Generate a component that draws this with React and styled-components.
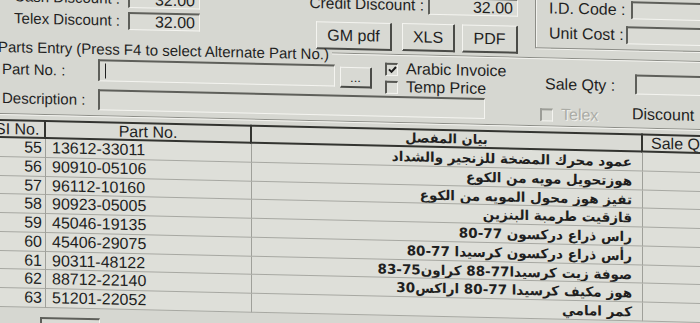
import React from "react";
import styled, { createGlobalStyle } from "styled-components";

const GlobalStyle = createGlobalStyle`
  html, body { margin: 0; padding: 0; background: #d6d7d1; overflow: hidden; }
  body { font-family: "Liberation Sans", Arial, sans-serif; color: #1f1f1f; }
`;

const Screen = styled.div`
  width: 700px;
  height: 323px;
  overflow: hidden;
  background: #d6d7d1;
`;

const Form = styled.div`
  width: 760px;
  margin-top: -14px;
  display: flex;
  flex-direction: column;
  transform: skewY(1.3deg);
  transform-origin: 0 0;
`;

const TopSection = styled.div`
  display: flex;
  height: 55px;
`;

const Column = styled.div`
  display: flex;
  flex-direction: column;
  width: ${(p) => p.$width}px;
  margin-left: ${(p) => p.$offset || 0}px;
  gap: ${(p) => p.$gap || 0}px;
  padding-top: ${(p) => p.$top || 0}px;
`;

const FieldRow = styled.div`
  display: flex;
  align-items: center;
  height: ${(p) => p.$h || 18}px;
`;

const Label = styled.div`
  width: ${(p) => p.$width}px;
  flex: none;
  text-align: ${(p) => p.$align || "left"};
  padding-left: ${(p) => p.$pad || 0}px;
  margin-top: ${(p) => p.$top || 0}px;
  box-sizing: border-box;
  font-size: ${(p) => p.$size || 15}px;
  line-height: 16px;
  white-space: nowrap;
  color: #1f1f1f;
`;

const Input = styled.div`
  flex: none;
  width: ${(p) => p.$width}px;
  height: ${(p) => p.$h || 18}px;
  margin-left: ${(p) => p.$ml || 0}px;
  margin-top: ${(p) => p.$top || 0}px;
  box-sizing: border-box;
  border-top: 2px solid #5e5f5a;
  border-left: 2px solid #5e5f5a;
  border-right: 1px solid #f4f4f0;
  border-bottom: 1px solid #f4f4f0;
  background: #dadbd5;
  font-size: 16px;
  line-height: ${(p) => (p.$h || 18) - 3}px;
  padding: 0 4px;
  display: flex;
  align-items: center;
  justify-content: ${(p) => (p.$caret ? "flex-start" : "flex-end")};
`;

const Caret = styled.span`
  display: block;
  width: 1px;
  height: 15px;
  background: #202020;
  margin-left: 1px;
`;

const Button = styled.div`
  flex: none;
  width: ${(p) => p.$width}px;
  height: ${(p) => p.$h || 28}px;
  margin-left: ${(p) => p.$ml || 0}px;
  margin-top: ${(p) => p.$top || 0}px;
  box-sizing: border-box;
  border-top: 1px solid #f4f4f0;
  border-left: 1px solid #f4f4f0;
  border-right: 2px solid #4a4b47;
  border-bottom: 2px solid #4a4b47;
  background: #d8d9d3;
  display: flex;
  align-items: center;
  justify-content: center;
  font-size: ${(p) => p.$size || 16}px;
  color: #1f1f1f;
`;

const ButtonRow = styled.div`
  display: flex;
  margin-top: 9px;
`;

const RightGroup = styled.div`
  display: flex;
  flex-direction: column;
  gap: 7px;
  margin-left: 15px;
  width: 220px;
  height: 50px;
  padding-left: 13px;
  padding-top: 1px;
  box-sizing: border-box;
  border-left: 1px solid #8c8d87;
  border-bottom: 1px solid #8c8d87;
  box-shadow: inset 1px 0 0 #f2f2ee, 0 1px 0 #f2f2ee;
`;

const CaptionRow = styled.div`
  display: flex;
  align-items: center;
  height: 12px;
  margin-left: -2px;
`;

const Caption = styled.span`
  font-size: 15px;
  line-height: 14px;
  white-space: nowrap;
  padding-right: 3px;
`;

const Rule = styled.div`
  flex: 1;
  height: 0;
  border-top: 1px solid #8c8d87;
  border-bottom: 1px solid #f2f2ee;
  margin-top: -2px;
`;

const EntryRow = styled.div`
  display: flex;
  align-items: flex-start;
  height: ${(p) => p.$h}px;
`;

const CheckColumn = styled.div`
  display: flex;
  flex-direction: column;
  gap: 4px;
  margin-left: ${(p) => p.$ml}px;
  margin-top: ${(p) => p.$top || 0}px;
  width: ${(p) => p.$width}px;
`;

const CheckRow = styled.div`
  display: flex;
  align-items: center;
  height: 14px;
  gap: 8px;
  font-size: 16px;
  white-space: nowrap;
  color: ${(p) => (p.$disabled ? "#abaca6" : "#1f1f1f")};
  text-shadow: ${(p) => (p.$disabled ? "1px 1px 0 #f2f2ee" : "none")};
`;

const Box = styled.span`
  width: 13px;
  height: 13px;
  flex: none;
  box-sizing: border-box;
  border-top: 2px solid ${(p) => (p.$disabled ? "#9c9d97" : "#575853")};
  border-left: 2px solid ${(p) => (p.$disabled ? "#9c9d97" : "#575853")};
  border-right: 1px solid #f4f4f0;
  border-bottom: 1px solid #f4f4f0;
  background: #dadbd5;
  display: flex;
  align-items: center;
  justify-content: center;
`;

const GroupBottom = styled.div`
  height: 0;
  border-top: 1px solid #8c8d87;
  border-bottom: 1px solid #f2f2ee;
`;

const Grid = styled.div`
  display: grid;
  grid-template-columns: 51px 206px 391px 120px;
  margin-left: -5px;
  margin-top: 4px;
  background: #dedfd9;
`;

const HeadCell = styled.div`
  height: 19px;
  box-sizing: border-box;
  border-top: 2px solid #333430;
  border-bottom: 2px solid #333430;
  border-right: 2px solid #333430;
  background: #dadbd5;
  font-size: ${(p) => p.$size || 16}px;
  line-height: 15px;
  text-align: ${(p) => p.$align || "center"};
  padding-left: ${(p) => p.$pad || 0}px;
  white-space: nowrap;
  overflow: hidden;
  font-family: ${(p) => (p.$arabic ? '"DejaVu Sans", sans-serif' : "inherit")};
  font-weight: ${(p) => (p.$arabic ? 700 : 400)};
`;

const Cell = styled.div`
  height: 18.75px;
  box-sizing: border-box;
  border-bottom: 1px solid #a7a8a2;
  border-right: 1px solid #9fa09a;
  line-height: 17px;
  white-space: nowrap;
  overflow: hidden;
  text-align: ${(p) => p.$align || "left"};
  padding: ${(p) => p.$pad || "0"};
  font-size: 16px;
`;

const ArabicCell = styled(Cell)`
  direction: rtl;
  text-align: right;
  font-family: "DejaVu Sans", sans-serif;
  font-weight: 700;
  font-size: 13.5px;
  line-height: 19px;
  padding-right: 10px;
`;

const Footer = styled.div`
  display: flex;
  margin-top: 9px;
  padding-left: 40px;
`;

const rows = [
  ["55", "13612-33011", "عمود محرك المضخة للزنجير والشداد"],
  ["56", "90910-05106", "هوزتحويل مويه من الكوع"],
  ["57", "96112-10160", "تفيز هوز محول المويه من الكوع"],
  ["58", "90923-05005", "قازقيت طرمبة البنزين"],
  ["59", "45046-19135", "راس ذراع دركسون 77-80"],
  ["60", "45406-29075", "رأس ذراع دركسون كرسيدا 77-80"],
  ["61", "90311-48122", "صوفة زيت كرسيدا77-88 كراون75-83"],
  ["62", "88712-22140", "هوز مكيف كرسيدا 77-80 اراكس30"],
  ["63", "51201-22052", "كمر امامي"],
];

const Check = () => (
  <svg width="9" height="8" viewBox="0 0 9 8">
    <path d="M1 3.5 L3.5 6 L8 1" stroke="#1a1a1a" strokeWidth="2" fill="none" />
  </svg>
);

export default function App() {
  return (
    <Screen>
      <GlobalStyle />
      <Form>
        <TopSection>
          <Column $width={205} $gap={4} $top={1}>
            <FieldRow>
              <Label $width={120} $align="right">Cash Discount :</Label>
              <Input $width={72} $ml={8}>32.00</Input>
            </FieldRow>
            <FieldRow>
              <Label $width={120} $align="right">Telex Discount :</Label>
              <Input $width={72} $ml={8}>32.00</Input>
            </FieldRow>
          </Column>
          <Column $width={220} $offset={95} $top={1}>
            <FieldRow>
              <Label $width={124} $align="right" $size={15.5}>Credit Discount :</Label>
              <Input $width={90} $ml={4}>32.00</Input>
            </FieldRow>
            <ButtonRow>
              <Button $width={76} $ml={16}>GM pdf</Button>
              <Button $width={53} $ml={10}>XLS</Button>
              <Button $width={56} $ml={7}>PDF</Button>
            </ButtonRow>
          </Column>
          <RightGroup>
            <FieldRow>
              <Label $width={82} $size={16}>I.D. Code :</Label>
              <Input $width={80} />
            </FieldRow>
            <FieldRow>
              <Label $width={77} $size={16}>Unit Cost :</Label>
              <Input $width={85} />
            </FieldRow>
          </RightGroup>
        </TopSection>

        <CaptionRow>
          <Caption>Parts Entry (Press F4 to select Alternate Part No.)</Caption>
          <Rule />
        </CaptionRow>

        <EntryRow $h={30}>
          <Label $width={98} $pad={2} $top={8}>Part No. :</Label>
          <Input $width={237} $h={22} $top={4} $caret>
            <Caret />
          </Input>
          <Button $width={32} $h={21} $ml={5} $top={6} $size={13}>...</Button>
          <CheckColumn $ml={13} $width={160}>
            <CheckRow>
              <Box><Check /></Box>
              <span>Arabic Invoice</span>
            </CheckRow>
            <CheckRow>
              <Box />
              <span>Temp Price</span>
            </CheckRow>
          </CheckColumn>
          <Label $width={90} $top={11} $size={16}>Sale Qty :</Label>
          <Input $width={80} $h={20} $top={7} />
        </EntryRow>

        <EntryRow $h={30}>
          <Label $width={98} $pad={2} $top={7}>Description :</Label>
          <Input $width={387} $h={21} $top={4} />
          <CheckColumn $ml={55} $top={12} $width={92}>
            <CheckRow $disabled>
              <Box $disabled />
              <span>Telex</span>
            </CheckRow>
          </CheckColumn>
          <Label $width={80} $top={9} $size={16}>Discount</Label>
        </EntryRow>

        <GroupBottom />

        <Grid>
          <HeadCell $align="left">SI No.</HeadCell>
          <HeadCell>Part No.</HeadCell>
          <HeadCell $arabic $size={13}>بيان المفصل</HeadCell>
          <HeadCell $align="left" $pad={8}>Sale Qty</HeadCell>
          {rows.map(([n, part, desc]) => (
            <React.Fragment key={n}>
              <Cell $align="right" $pad="0 3px 0 0">{n}</Cell>
              <Cell $pad="0 0 0 6px">{part}</Cell>
              <ArabicCell>{desc}</ArabicCell>
              <Cell />
            </React.Fragment>
          ))}
        </Grid>

        <Footer>
          <Input $width={60} $h={20} />
        </Footer>
      </Form>
    </Screen>
  );
}
